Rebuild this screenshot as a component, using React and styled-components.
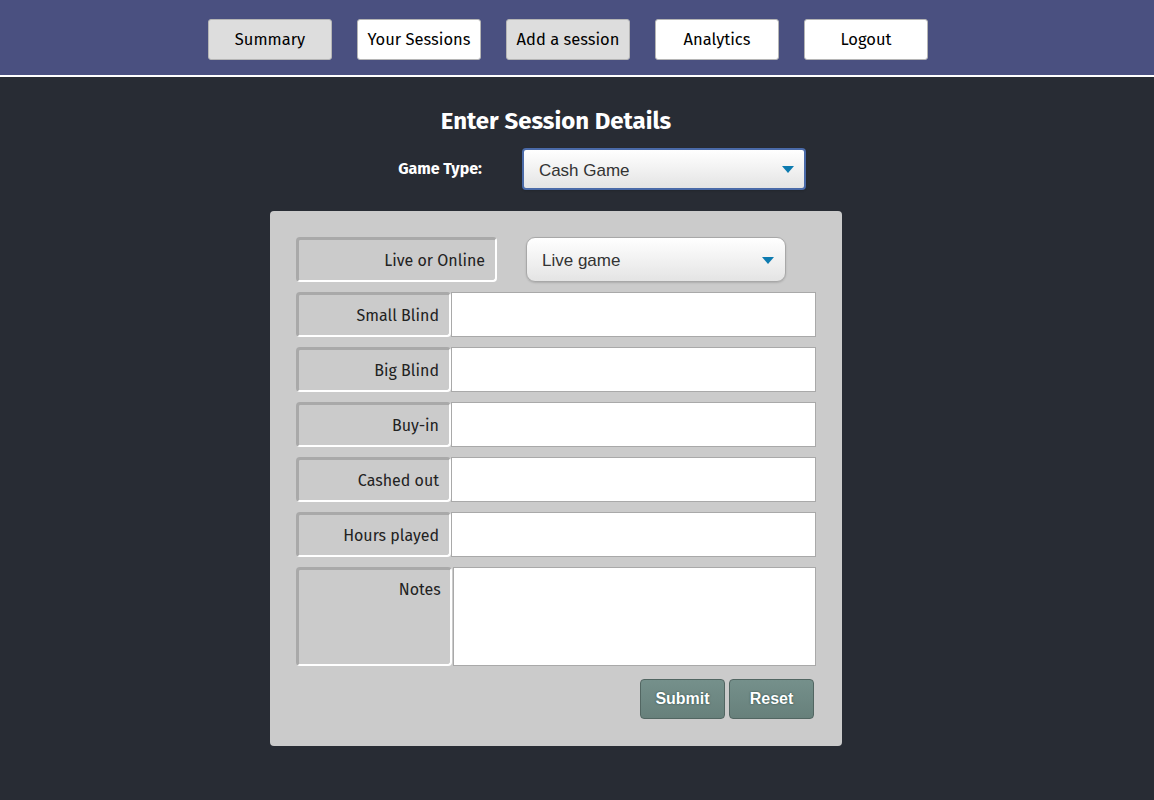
import styled, { createGlobalStyle } from "styled-components";

const GlobalStyle = createGlobalStyle`
  html, body {
    margin: 0;
    padding: 0;
    background: #282c34;
  }
  body {
    font-family: "Fira Sans", Lato, "Noto Sans", sans-serif;
  }
`;

const NavBar = styled.nav`
  display: flex;
  justify-content: center;
  gap: 25px;
  height: 77px;
  box-sizing: border-box;
  padding: 19px 18px 0 0;
  background: #4a5080;
  border-bottom: 2px solid #fff;
`;

const NavButton = styled.button`
  width: 124px;
  height: 41px;
  border: 1px solid #b5b5b5;
  border-radius: 3px;
  background: ${(p) => (p.active ? "#dddddd" : "#ffffff")};
  color: #000;
  font-family: inherit;
  font-size: 16.5px;
  cursor: pointer;
`;

const Main = styled.main`
  display: flex;
  flex-direction: column;
  align-items: center;
  padding: 28px 42px 40px 0;
`;

const Title = styled.h2`
  margin: 0;
  color: #fff;
  font-size: 24px;
  font-weight: 700;
  line-height: 32px;
`;

const GameTypeRow = styled.div`
  display: flex;
  align-items: center;
  gap: 40px;
  margin: 11px 0 21px 92px;
`;

const GameTypeLabel = styled.label`
  color: #fff;
  font-size: 16px;
  font-weight: 700;
  margin-top: -2px;
`;

const SelectWrap = styled.div`
  position: relative;
  width: ${(p) => p.width}px;
  height: ${(p) => p.height}px;
`;

const Select = styled.select`
  appearance: none;
  width: 100%;
  height: 100%;
  box-sizing: border-box;
  padding: 2px 0 0 15px;
  font-family: "Liberation Sans", Arial, sans-serif;
  font-size: 17px;
  color: #333;
  background: linear-gradient(#ffffff, #e4e4e4);
  border: ${(p) => (p.focused ? "2px solid #4a6aa8" : "1px solid #a8a8a8")};
  border-radius: ${(p) => p.radius}px;
  box-shadow: 0 1px 2px rgba(0, 0, 0, 0.15);
  outline: none;
`;

const Caret = styled.span`
  position: absolute;
  right: 12px;
  top: 50%;
  margin-top: -3px;
  width: 0;
  height: 0;
  border-left: 6px solid transparent;
  border-right: 6px solid transparent;
  border-top: 7px solid #0d7bb0;
  pointer-events: none;
`;

const Panel = styled.form`
  width: 572px;
  box-sizing: border-box;
  padding: 26px 26px 27px;
  background: #cbcbcb;
  border-radius: 4px;
  display: flex;
  flex-direction: column;
  gap: 10px;
`;

const Row = styled.div`
  display: flex;
  align-items: stretch;
  height: ${(p) => p.height || 45}px;
`;

const FieldLabel = styled.label`
  width: ${(p) => p.width || 155}px;
  box-sizing: border-box;
  display: flex;
  justify-content: flex-end;
  align-items: ${(p) => (p.top ? "flex-start" : "center")};
  padding: ${(p) => (p.top ? "10px 9px 0 0" : "0 10px 0 0")};
  border-top: 3px solid #a9a9a9;
  border-left: 3px solid #a9a9a9;
  border-bottom: 2px solid #fff;
  border-right: 2px solid #fff;
  border-radius: 4px;
  color: #222;
  font-size: 16px;
`;

const Input = styled.input`
  width: 365px;
  box-sizing: border-box;
  border: 1px solid #a9a9a9;
  background: #fff;
  font-size: 16px;
  padding: 0 8px;
  outline: none;
`;

const TextArea = styled.textarea`
  width: 364px;
  margin-left: 1px;
  box-sizing: border-box;
  border: 1px solid #a9a9a9;
  background: #fff;
  resize: none;
  outline: none;
`;

const Actions = styled.div`
  display: flex;
  justify-content: flex-end;
  gap: 4px;
  padding-right: 2px;
  margin-top: 3px;
`;

const ActionButton = styled.button`
  width: 85px;
  height: 40px;
  border: 1px solid #526662;
  border-radius: 4px;
  background: linear-gradient(#75908b, #67807b);
  color: #fff;
  font-family: "Liberation Sans", Arial, sans-serif;
  font-size: 16px;
  font-weight: 700;
  text-shadow: 0 0 2px rgba(0, 40, 40, 0.7);
  cursor: pointer;
`;

const fields = ["Small Blind", "Big Blind", "Buy-in", "Cashed out", "Hours played"];

const navItems = [
  { label: "Summary", active: true },
  { label: "Your Sessions" },
  { label: "Add a session", active: true },
  { label: "Analytics" },
  { label: "Logout" },
];

export default function App() {
  return (
    <>
      <GlobalStyle />
      <NavBar>
        {navItems.map((item) => (
          <NavButton key={item.label} active={item.active}>
            {item.label}
          </NavButton>
        ))}
      </NavBar>
      <Main>
        <Title>Enter Session Details</Title>
        <GameTypeRow>
          <GameTypeLabel>Game Type:</GameTypeLabel>
          <SelectWrap width={284} height={42}>
            <Select focused radius={4} defaultValue="cash">
              <option value="cash">Cash Game</option>
              <option value="tournament">Tournament</option>
            </Select>
            <Caret />
          </SelectWrap>
        </GameTypeRow>
        <Panel onSubmit={(e) => e.preventDefault()}>
          <Row>
            <FieldLabel width={201}>Live or Online</FieldLabel>
            <div style={{ marginLeft: 29 }}>
              <SelectWrap width={260} height={45}>
                <Select radius={9} defaultValue="live">
                  <option value="live">Live game</option>
                  <option value="online">Online game</option>
                </Select>
                <Caret />
              </SelectWrap>
            </div>
          </Row>
          {fields.map((f) => (
            <Row key={f}>
              <FieldLabel>{f}</FieldLabel>
              <Input type="text" />
            </Row>
          ))}
          <Row height={99}>
            <FieldLabel top width={156}>Notes</FieldLabel>
            <TextArea />
          </Row>
          <Actions>
            <ActionButton type="submit">Submit</ActionButton>
            <ActionButton type="reset">Reset</ActionButton>
          </Actions>
        </Panel>
      </Main>
    </>
  );
}
